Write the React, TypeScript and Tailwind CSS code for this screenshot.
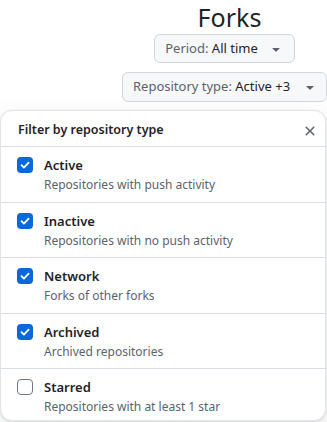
import React from "react";

const items = [
  { label: "Active", desc: "Repositories with push activity", checked: true },
  { label: "Inactive", desc: "Repositories with no push activity", checked: true },
  { label: "Network", desc: "Forks of other forks", checked: true },
  { label: "Archived", desc: "Archived repositories", checked: true },
  { label: "Starred", desc: "Repositories with at least 1 star", checked: false },
];

function Caret() {
  return (
    <svg width="16" height="16" viewBox="0 0 16 16" className="fill-[#59636e]">
      <path d="m4.427 7.427 3.396 3.396a.25.25 0 0 0 .354 0l3.396-3.396A.25.25 0 0 0 11.396 7H4.604a.25.25 0 0 0-.177.427Z" />
    </svg>
  );
}

function Check({ checked }: { checked: boolean }) {
  if (!checked)
    return <div className="w-4 h-4 rounded-[4px] border border-[#6e7781] bg-white shrink-0" />;
  return (
    <div className="w-4 h-4 rounded-[4px] bg-[#0969da] shrink-0 flex items-center justify-center">
      <svg width="12" height="12" viewBox="0 0 12 12" fill="none">
        <path d="M2.5 6.2 4.9 8.6 9.6 3.6" stroke="white" strokeWidth="1.8" strokeLinecap="round" strokeLinejoin="round" />
      </svg>
    </div>
  );
}

export default function App() {
  return (
    <div className="w-[327px] h-[422px] overflow-hidden bg-white relative" style={{ fontFamily: '"Noto Sans", sans-serif' }}>
      <div className="flex flex-col items-center ml-[122px] w-[205px]">
        <h1 className="text-[25px] leading-[34px] text-[#1f2328] font-normal pl-[10px]">Forks</h1>
        <button className="h-[29px] pl-[10px] pr-[10px] flex items-center gap-[10px] rounded-md border border-[#d0d7de] bg-[#f6f8fa] text-[13px] text-[#1f2328]">
          <span><span className="text-[#59636e]">Period:</span> All time</span>
          <Caret />
        </button>
      </div>
      <div className="flex justify-end mt-[9px]">
        <button className="h-[30px] w-[205px] pl-[10px] pr-[8px] flex items-center justify-between rounded-md border border-[#d0d7de] bg-[#f6f8fa] text-[13px] text-[#1f2328]">
          <span><span className="text-[#59636e]">Repository type:</span> Active +3</span>
          <Caret />
        </button>
      </div>
      <div className="absolute left-0 top-[110px] w-[326px] h-[311px] bg-white rounded-xl border border-[#e1e4e8] shadow-[0_1px_3px_rgba(31,35,40,0.12),0_8px_24px_rgba(66,74,83,0.12)]">
        <div className="h-[36px] flex items-center justify-between pt-[4px] pl-[17px] pr-[7px] border-b border-[#d8dee4]">
          <span className="text-[12.5px] font-semibold text-[#1f2328]">Filter by repository type</span>
          <svg width="16" height="16" viewBox="0 0 16 16" className="fill-[#59636e]">
            <path d="M3.72 3.72a.75.75 0 0 1 1.06 0L8 6.94l3.22-3.22a.749.749 0 0 1 1.275.326.749.749 0 0 1-.215.734L9.06 8l3.22 3.22a.749.749 0 0 1-.326 1.275.749.749 0 0 1-.734-.215L8 9.06l-3.22 3.22a.751.751 0 0 1-1.042-.018.751.751 0 0 1-.018-1.042L6.94 8 3.72 4.78a.75.75 0 0 1 0-1.06Z" />
          </svg>
        </div>
        {items.map((it, i) => (
          <div key={it.label} className={`h-[55.5px] flex items-start gap-[11px] pl-[16px] pt-[8px] ${i < items.length - 1 ? "border-b border-[#d8dee4]" : ""}`}>
            <div className="pt-[2px]"><Check checked={it.checked} /></div>
            <div className="flex flex-col">
              <span className="text-[13px] leading-[20px] font-semibold text-[#1f2328]">{it.label}</span>
              <span className="text-[12px] leading-[19px] text-[#59636e]">{it.desc}</span>
            </div>
          </div>
        ))}
      </div>
    </div>
  );
}
